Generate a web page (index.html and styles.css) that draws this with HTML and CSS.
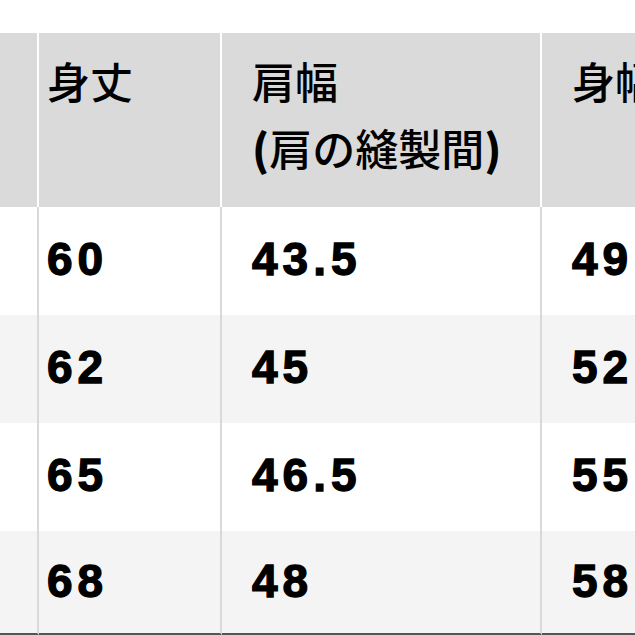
FILE: index.html
```html
<!DOCTYPE html>
<html lang="ja">
<head>
<meta charset="utf-8">
<link rel="stylesheet" href="styles.css">
</head>
<body>
<div class="wrap">
<table class="size">
  <colgroup>
    <col class="c0"><col class="c1"><col class="c2"><col class="c3">
  </colgroup>
  <thead>
    <tr>
      <th class="first"></th>
      <th class="narrow">身丈</th>
      <th>肩幅<br><span class="paren">(</span>肩の縫製間<span class="paren">)</span></th>
      <th>身幅</th>
    </tr>
  </thead>
  <tbody>
    <tr><td class="first"></td><td class="narrow">60</td><td>43.5</td><td>49</td></tr>
    <tr class="alt"><td class="first"></td><td class="narrow">62</td><td>45</td><td>52</td></tr>
    <tr><td class="first"></td><td class="narrow">65</td><td>46.5</td><td>55</td></tr>
    <tr class="alt last"><td class="first"></td><td class="narrow">68</td><td>48</td><td>58</td></tr>
  </tbody>
</table>
</div>
</body>
</html>
```
FILE: styles.css
```css
html, body {
  margin: 0;
  padding: 0;
  background: #ffffff;
  overflow: hidden;
}
.wrap {
  padding-top: 33px;
  width: 635px;
  height: 602px;
  overflow: hidden;
}
.size {
  border-collapse: separate;
  border-spacing: 0;
  table-layout: fixed;
  width: 760px;
  font-family: "Noto Sans CJK JP", "Liberation Sans", sans-serif;
  color: #000;
}
.c0 { width: 39px; }
.c1 { width: 183px; }
.c2 { width: 320px; }
.c3 { width: 218px; }
.size th {
  background: #dadada;
  border-right: 2px solid #ffffff;
  height: 174px;
  box-sizing: border-box;
  padding: 14px 0 0 30px;
  text-align: left;
  vertical-align: top;
  font-size: 43px;
  font-weight: 500;
  line-height: 67px;
  white-space: nowrap;
}
.size th .paren {
  font-weight: 900;
}
.size td {
  border-right: 2px solid #d9d9d9;
  height: 108px;
  box-sizing: border-box;
  padding: 0 0 4px 30px;
  vertical-align: middle;
  font-family: "Liberation Sans", Arial, sans-serif;
  font-weight: 700;
  font-size: 46px;
  letter-spacing: 5px;
  -webkit-text-stroke: 1.3px #000;
  white-space: nowrap;
}
.size .narrow { padding-left: 8px; }
.size .first { padding: 0; }
.size tr.alt td { background: #f4f4f4; }
.size tr.last td {
  height: 104px;
  border-bottom: 2px solid #555555;
  padding-bottom: 2px;
}
```
